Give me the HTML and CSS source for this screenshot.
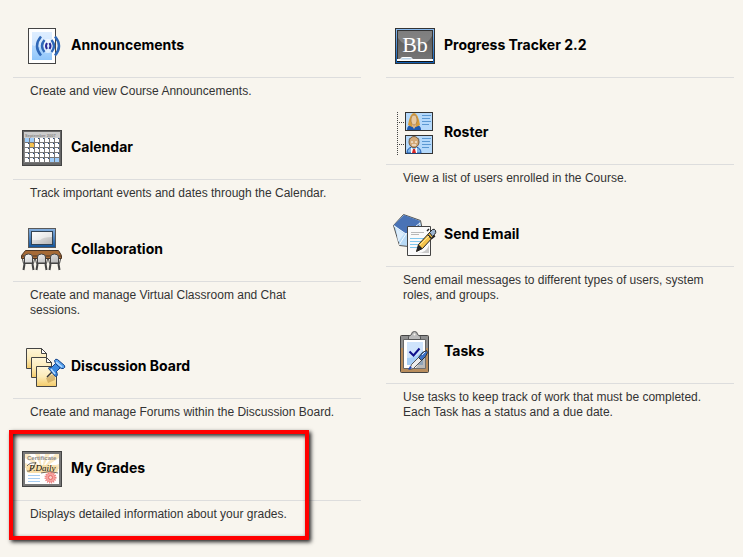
FILE: index.html
```html
<!DOCTYPE html>
<html lang="en">
<head>
  <meta charset="UTF-8">
  <meta name="viewport" content="width=device-width, initial-scale=1.0">
  <title>Course Tools</title>
  <link rel="stylesheet" href="styles.css">
</head>
<body>

  <main class="tools">
    <ul class="column">
      <li class="tool">
        <div class="tool-head">
          <svg class="icon" viewBox="0 0 48 48" aria-hidden="true">
            <defs>
              <linearGradient id="sky" x1="0" y1="0" x2="0" y2="1">
                <stop offset="0" stop-color="#d9ebff"/>
                <stop offset="1" stop-color="#8fc6fb"/>
              </linearGradient>
            </defs>
            <rect x="10.5" y="6.5" width="27" height="35" fill="#fff" stroke="#444"/>
            <rect x="14" y="10" width="20" height="28" fill="url(#sky)"/>
            <path d="M14 23q10 5 20-1V10H14z" fill="#e3f0ff" opacity=".6"/>
            <circle cx="30" cy="24" r="7" fill="#fff" opacity=".6"/>
            <g fill="none" stroke="#2f68b8" stroke-width="2.5">
              <path d="M23 14.500q-8 9.500 0 19M37 14.500q8 9.500 0 19"/>
              <path d="M26.500 18q-5 6 0 12M33.500 18q5 6 0 12"/>
            </g>
            <path d="M29 21q-2 3 0 6M31.500 21q2 3 0 6" fill="none" stroke="#2a2a98" stroke-width="2"/>
          </svg>
          <h2><a href="#announcements">Announcements</a></h2>
        </div>
        <p>Create and view Course Announcements.</p>
      </li>

      <li class="tool">
        <div class="tool-head">
          <svg class="icon" viewBox="0 0 48 48" aria-hidden="true">
            <defs>
              <pattern id="days" x="7" y="14" width="5" height="5" patternUnits="userSpaceOnUse">
                <rect width="5" height="5" fill="#777"/>
                <rect width="4" height="4" fill="#fff"/>
                <rect x="3" width="1" height="1" fill="#234a86"/>
              </pattern>
            </defs>
            <rect x="4.5" y="6.5" width="39" height="35" fill="#666" stroke="#444"/>
            <rect x="6" y="8" width="36" height="6" fill="#ccc"/>
            <text x="7" y="13" class="month">September 2007</text>
            <rect x="6" y="14" width="36" height="25" fill="#888"/>
            <rect x="7" y="14" width="35" height="25" fill="url(#days)"/>
            <path d="M7 14h4v4H7zM12 14h4v4h-4zM32 34h4v4h-4zM37 34h4v4h-4z" fill="#9fcdfa"/>
            <path d="M12 19h4v4h-4z" fill="#f2c24e"/>
            <path d="M15 19h1v1h-1z" fill="#c62"/>
          </svg>
          <h2><a href="#calendar">Calendar</a></h2>
        </div>
        <p>Track important events and dates through the Calendar.</p>
      </li>

      <li class="tool">
        <div class="tool-head">
          <svg class="icon" viewBox="0 0 48 48" aria-hidden="true">
            <defs>
              <linearGradient id="frame" x1="0" y1="0" x2="0" y2="1">
                <stop offset="0" stop-color="#86b0df"/>
                <stop offset="1" stop-color="#125399"/>
              </linearGradient>
              <linearGradient id="silver" x1="0" y1="0" x2="1" y2="1">
                <stop offset="0" stop-color="#fafafa"/>
                <stop offset="1" stop-color="#b4b4b4"/>
              </linearGradient>
            </defs>
            <rect x="10.5" y="2.5" width="27" height="19" fill="url(#frame)" stroke="#5a5a5a"/>
            <rect x="13.5" y="5.5" width="21" height="13" fill="url(#silver)" stroke="#345"/>
            <path d="M14 6h20v5q-9 0-12 3H14z" fill="#fff" opacity=".5"/>
            <path d="M7.500 24.500h33l3 5v3h-40v-3z" fill="#a66a36" stroke="#4b3524"/>
            <path d="M4 30h39" stroke="#4b3524"/>
            <g stroke="#444">
              <path d="M6.500 37v-6q0-3 4-3t4 3v6zM19.500 37v-6q0-3 4-3t4 3v6zM32.500 37v-6q0-3 4-3t4 3v6z" fill="url(#silver)"/>
              <path d="M4.500 33l1 4.500h10l1-4.500M17.500 33l1 4.500h10l1-4.500M30.500 33l1 4.500h10l1-4.500" fill="none"/>
              <path d="M6.500 38l-1 6M14.500 38l1 6M19.500 38l-1 6M27.500 38l1 6M32.500 38l-1 6M40.500 38l1 6" stroke-width="2"/>
            </g>
          </svg>
          <h2><a href="#collaboration">Collaboration</a></h2>
        </div>
        <p>Create and manage Virtual Classroom and Chat sessions.</p>
      </li>

      <li class="tool">
        <div class="tool-head">
          <svg class="icon" viewBox="0 0 48 48" aria-hidden="true">
            <defs>
              <linearGradient id="note" x1="0" y1="0" x2="0" y2="1">
                <stop offset="0" stop-color="#fff6da"/>
                <stop offset=".5" stop-color="#fcebb9"/>
                <stop offset="1" stop-color="#f4cb68"/>
              </linearGradient>
            </defs>
            <g fill="url(#note)" stroke="#444">
              <path d="M8.500 5.500h15l5 5v15h-20z"/>
              <path d="M23.500 5.500v5h5z" fill="#fff"/>
              <path d="M13.500 14.500h15l5 5v15h-20z"/>
              <path d="M28.500 14.500v5h5z" fill="#fff"/>
              <path d="M18.500 23.500h20v20h-20z"/>
            </g>
            <path d="M28 35l9-5v7l-7 3z" fill="#b58a3c" opacity=".5"/>
            <path d="M29 34l5-5" stroke="#333" stroke-width="1.5"/>
            <path d="M30.500 25.500q0-2 3-1l4-4 5 4-4 4q2 5-1 5z" fill="#3c8ae0" stroke="#123f86"/>
            <path d="M36.500 17.500q1-2 3-1l7 6q1 2-1 3-2 1-5-2-4-3-4-6z" fill="#59a3ef" stroke="#123f86"/>
            <path d="M33 26l4 5M38 19l6 5" stroke="#b8dcff" stroke-width="1.5"/>
          </svg>
          <h2><a href="#discussion">Discussion Board</a></h2>
        </div>
        <p>Create and manage Forums within the Discussion Board.</p>
      </li>

      <li class="tool highlighted">
        <div class="tool-head">
          <svg class="icon" viewBox="0 0 48 48" aria-hidden="true">
            <rect x="4.5" y="6.5" width="39" height="35" fill="#777" stroke="#444"/>
            <rect x="7" y="9" width="34" height="30" fill="#fff"/>
            <path d="M24 24L7 13v-4h4zM24 24L17 9h5zM24 24L27 9h5zM24 24L37 9h4v4zM24 24l17-5v5zM24 24L7 18v5z" fill="#fbe9c4"/>
            <rect x="8" y="20" width="32" height="8" rx="4" fill="#f8dfaa"/>
            <text x="9" y="15" class="certificate">Certificate</text>
            <text x="11" y="26" class="signature">P.Daily</text>
            <path d="M9 26q5 2 9-9M23 28q9-3 17 0M9 21q3-4 9-3" fill="none" stroke="#333" stroke-width=".7"/>
            <path d="M10 30.500h12M10 33.500h12M10 36.500h12" stroke="#a6cdf2"/>
            <circle cx="32.5" cy="32.5" r="5" fill="#f6a3a0" stroke="#ee7f7f" stroke-width="2" stroke-dasharray="1 1"/>
            <circle cx="32.5" cy="32.5" r="2" fill="#fbd0ca" stroke="#e56a6a"/>
          </svg>
          <h2><a href="#grades">My Grades</a></h2>
        </div>
        <p>Displays detailed information about your grades.</p>
      </li>
    </ul>

    <ul class="column">
      <li class="tool">
        <div class="tool-head">
          <svg class="icon" viewBox="0 0 48 48" aria-hidden="true">
            <defs>
              <linearGradient id="slate" x1="0" y1="0" x2="0" y2="1">
                <stop offset="0" stop-color="#555"/>
                <stop offset="1" stop-color="#777"/>
              </linearGradient>
              <linearGradient id="rim" x1="0" y1="0" x2="0" y2="1">
                <stop offset="0" stop-color="#8cbcf0"/>
                <stop offset="1" stop-color="#0b5cb4"/>
              </linearGradient>
            </defs>
            <rect x="4.5" y="6.5" width="39" height="35" fill="url(#rim)" stroke="#333"/>
            <rect x="6.5" y="8.5" width="35" height="29" fill="url(#slate)" stroke="#333"/>
            <path d="M7 9h34v5q-5 10-17 10T7 16z" fill="#999" opacity=".6"/>
            <text x="24" y="30" class="bb">Bb</text>
            <path d="M6 38h36" stroke="#fff" stroke-width="2"/>
            <path d="M6 39.500h36" stroke="#111"/>
            <path d="M10 36.500q0-1 2-1h7q2 0 2 1l-1 1.500H9z" fill="#b9d3e8" stroke="#fff"/>
          </svg>
          <h2><a href="#progress">Progress Tracker 2.2</a></h2>
        </div>
      </li>

      <li class="tool">
        <div class="tool-head">
          <svg class="icon" viewBox="0 0 48 48" aria-hidden="true">
            <path d="M6.500 3v43M8 13.500h6M8 35.500h6" fill="none" stroke="#444" stroke-dasharray="1 1"/>
            <g fill="#b5d9fb" stroke="#333">
              <rect x="14.5" y="3.5" width="27" height="18"/>
              <rect x="14.5" y="26.5" width="27" height="18"/>
            </g>
            <path d="M31 6.500h9M31 9.500h8M31 12.500h9M31 15.500h7M31 29.500h9M31 32.500h8M31 35.500h9M31 38.500h7" stroke="#5b98d2"/>
            <path d="M16 21q0-5 5-5h4q5 0 5 5z" fill="#1d59b0"/>
            <path d="M17 16q2-12 6-12t6 12l-4 2h-4z" fill="#d79c3b"/>
            <path d="M21 13h4v4l-2 3-2-3z" fill="#d8b48c"/>
            <ellipse cx="23" cy="11" rx="3" ry="5" fill="#e7c9a2" stroke="#886339" stroke-width=".5"/>
            <path d="M16 44q0-5 5-6h4q5 1 5 6z" fill="#7eb5e8" stroke="#1d59b0"/>
            <path d="M20 38l3 3 3-3v6h-6z" fill="#fff"/>
            <path d="M22 40h2l1 4h-4z" fill="#d32525"/>
            <ellipse cx="23" cy="33" rx="5" ry="5.5" fill="#d4aa78" stroke="#755a3c"/>
            <path d="M20 33h2M24 33h2M21 36h4" stroke="#fff"/>
            <path d="M18 31l1-2M28 31l-1-2" stroke="#777"/>
          </svg>
          <h2><a href="#roster">Roster</a></h2>
        </div>
        <p>View a list of users enrolled in the Course.</p>
      </li>

      <li class="tool">
        <div class="tool-head">
          <svg class="icon" viewBox="0 0 48 48" aria-hidden="true">
            <path d="M2.500 14.500l10-11 17 6 2 10-5 17-18-2z" fill="#b8daf6" stroke="#555"/>
            <path d="M3 14l10-10 16 6-2 9-12 4z" fill="#4a73b6"/>
            <path d="M3 15l12 8 14-11M8 34l7-11" fill="none" stroke="#f4faff"/>
            <path d="M5 17l8 6-6 8z" fill="#dcedfc"/>
            <path d="M16.500 15.500h23v29h-23z" fill="#fafafa" stroke="#444"/>
            <path d="M20 21.500h13M20 23.500h8" stroke="#b8b8b8"/>
            <path d="M19 27.500h16M19 30.500h13M19 33.500h10M19 36.500h8" stroke="#7fc7ee"/>
            <path d="M27 42q8 0 11-8v8z" fill="#aaa" opacity=".6"/>
            <path d="M25.500 40.500l2-7 12-13 4 4-12 13z" fill="#f4c34b" stroke="#222"/>
            <path d="M25.500 40.500l2-7 4 4z" fill="#222"/>
            <path d="M38.500 21.500l3-3q2-1 3 1t-1 4l-2 2z" fill="#9bb4cf" stroke="#222"/>
            <path d="M36 20l2-2M40 28l4-3M37 24l4 4" stroke="#222" stroke-width="1.5"/>
            <path d="M29 34l9-9" stroke="#ffe69b"/>
          </svg>
          <h2><a href="#email">Send Email</a></h2>
        </div>
        <p>Send email messages to different types of users, system roles, and groups.</p>
      </li>

      <li class="tool">
        <div class="tool-head">
          <svg class="icon" viewBox="0 0 48 48" aria-hidden="true">
            <rect x="9.5" y="7.5" width="28" height="37" rx="1" fill="#b98d5d" stroke="#444"/>
            <path d="M10 8h27v12H10z" fill="#8f8f8f"/>
            <path d="M12.500 11.500h22v29h-22z" fill="#fff" stroke="#666"/>
            <path d="M16 14h16v23H16z" fill="#a7cff8"/>
            <path d="M16 14h16v8q-6 8-16 8z" fill="#cfe4fc"/>
            <path d="M35 25v16H24z" fill="#777" opacity=".5"/>
            <path d="M17.500 11.500v-3l3-2q0-3 3-3t3 3l3 2v3z" fill="#bbb" stroke="#555"/>
            <circle cx="23.5" cy="6.5" r="1" fill="#f8f5ee"/>
            <path d="M18.500 23.500l4 4 6-7" fill="none" stroke="#10108c" stroke-width="2"/>
            <path d="M18.500 41.500l2-5 9-9 3 3-10 10z" fill="#eee" stroke="#555"/>
            <path d="M27.500 29.500l4-5 4-2 1 2-2 4-4 4z" fill="#3b70c4" stroke="#333"/>
            <path d="M17 42l2-4 2 2z" fill="#1b45bd"/>
            <path d="M31 27l3-3" stroke="#dceaff"/>
          </svg>
          <h2><a href="#tasks">Tasks</a></h2>
        </div>
        <p>Use tasks to keep track of work that must be completed. Each Task has a status and a due date.</p>
      </li>
    </ul>
  </main>

</body>
</html>
```
FILE: styles.css
```css
body {
  margin: 0;
  font-family: "Liberation Sans", Arial, sans-serif;
  font-size: 12px;
  line-height: 15px;
  color: #333;
  background-color: #f8f5ee;
}

.tools {
  display: grid;
  grid-template-columns: 1fr 1fr;
  gap: 25px;
  padding: 14px 9px 14px 13px;
}

.column {
  margin: 0;
  padding: 0;
  list-style: none;
}

.tool {
  position: relative;
  padding-bottom: 17px;
}

.tool-head {
  display: flex;
  align-items: center;
  gap: 5px;
  padding: 8px 5px 7px;
  margin-bottom: 6px;
  border-bottom: 1px solid #ddd;
}

.icon {
  width: 48px;
  height: 48px;
}

h2 {
  margin: 0;
  padding-bottom: 2px;
  font-family: Inter, "Liberation Sans", sans-serif;
  font-size: 14px;
  line-height: 18px;
}

h2 a {
  color: #000;
  text-decoration: none;
}

h2 a:hover {
  text-decoration: underline;
}

.tool p {
  margin: 0;
  padding: 0 25px 0 17px;
}

/* red marker drawn over the tool */
.highlighted::after {
  content: "";
  position: absolute;
  top: -7px;
  right: 52px;
  bottom: -1px;
  left: -4px;
  border: 4px solid #f00;
  box-shadow: 2px 2px 4px #222, inset 2px 2px 4px #222;
  pointer-events: none;
}

.month {
  font-size: 4px;
  font-weight: bold;
  fill: #888;
}

.certificate {
  font-size: 6px;
  font-weight: bold;
  fill: #888;
}

.signature {
  font-family: "Liberation Serif", serif;
  font-size: 9px;
  font-style: italic;
  fill: #111;
}

.bb {
  font-family: "Liberation Serif", serif;
  font-size: 22px;
  text-anchor: middle;
  fill: #fff;
}
```
